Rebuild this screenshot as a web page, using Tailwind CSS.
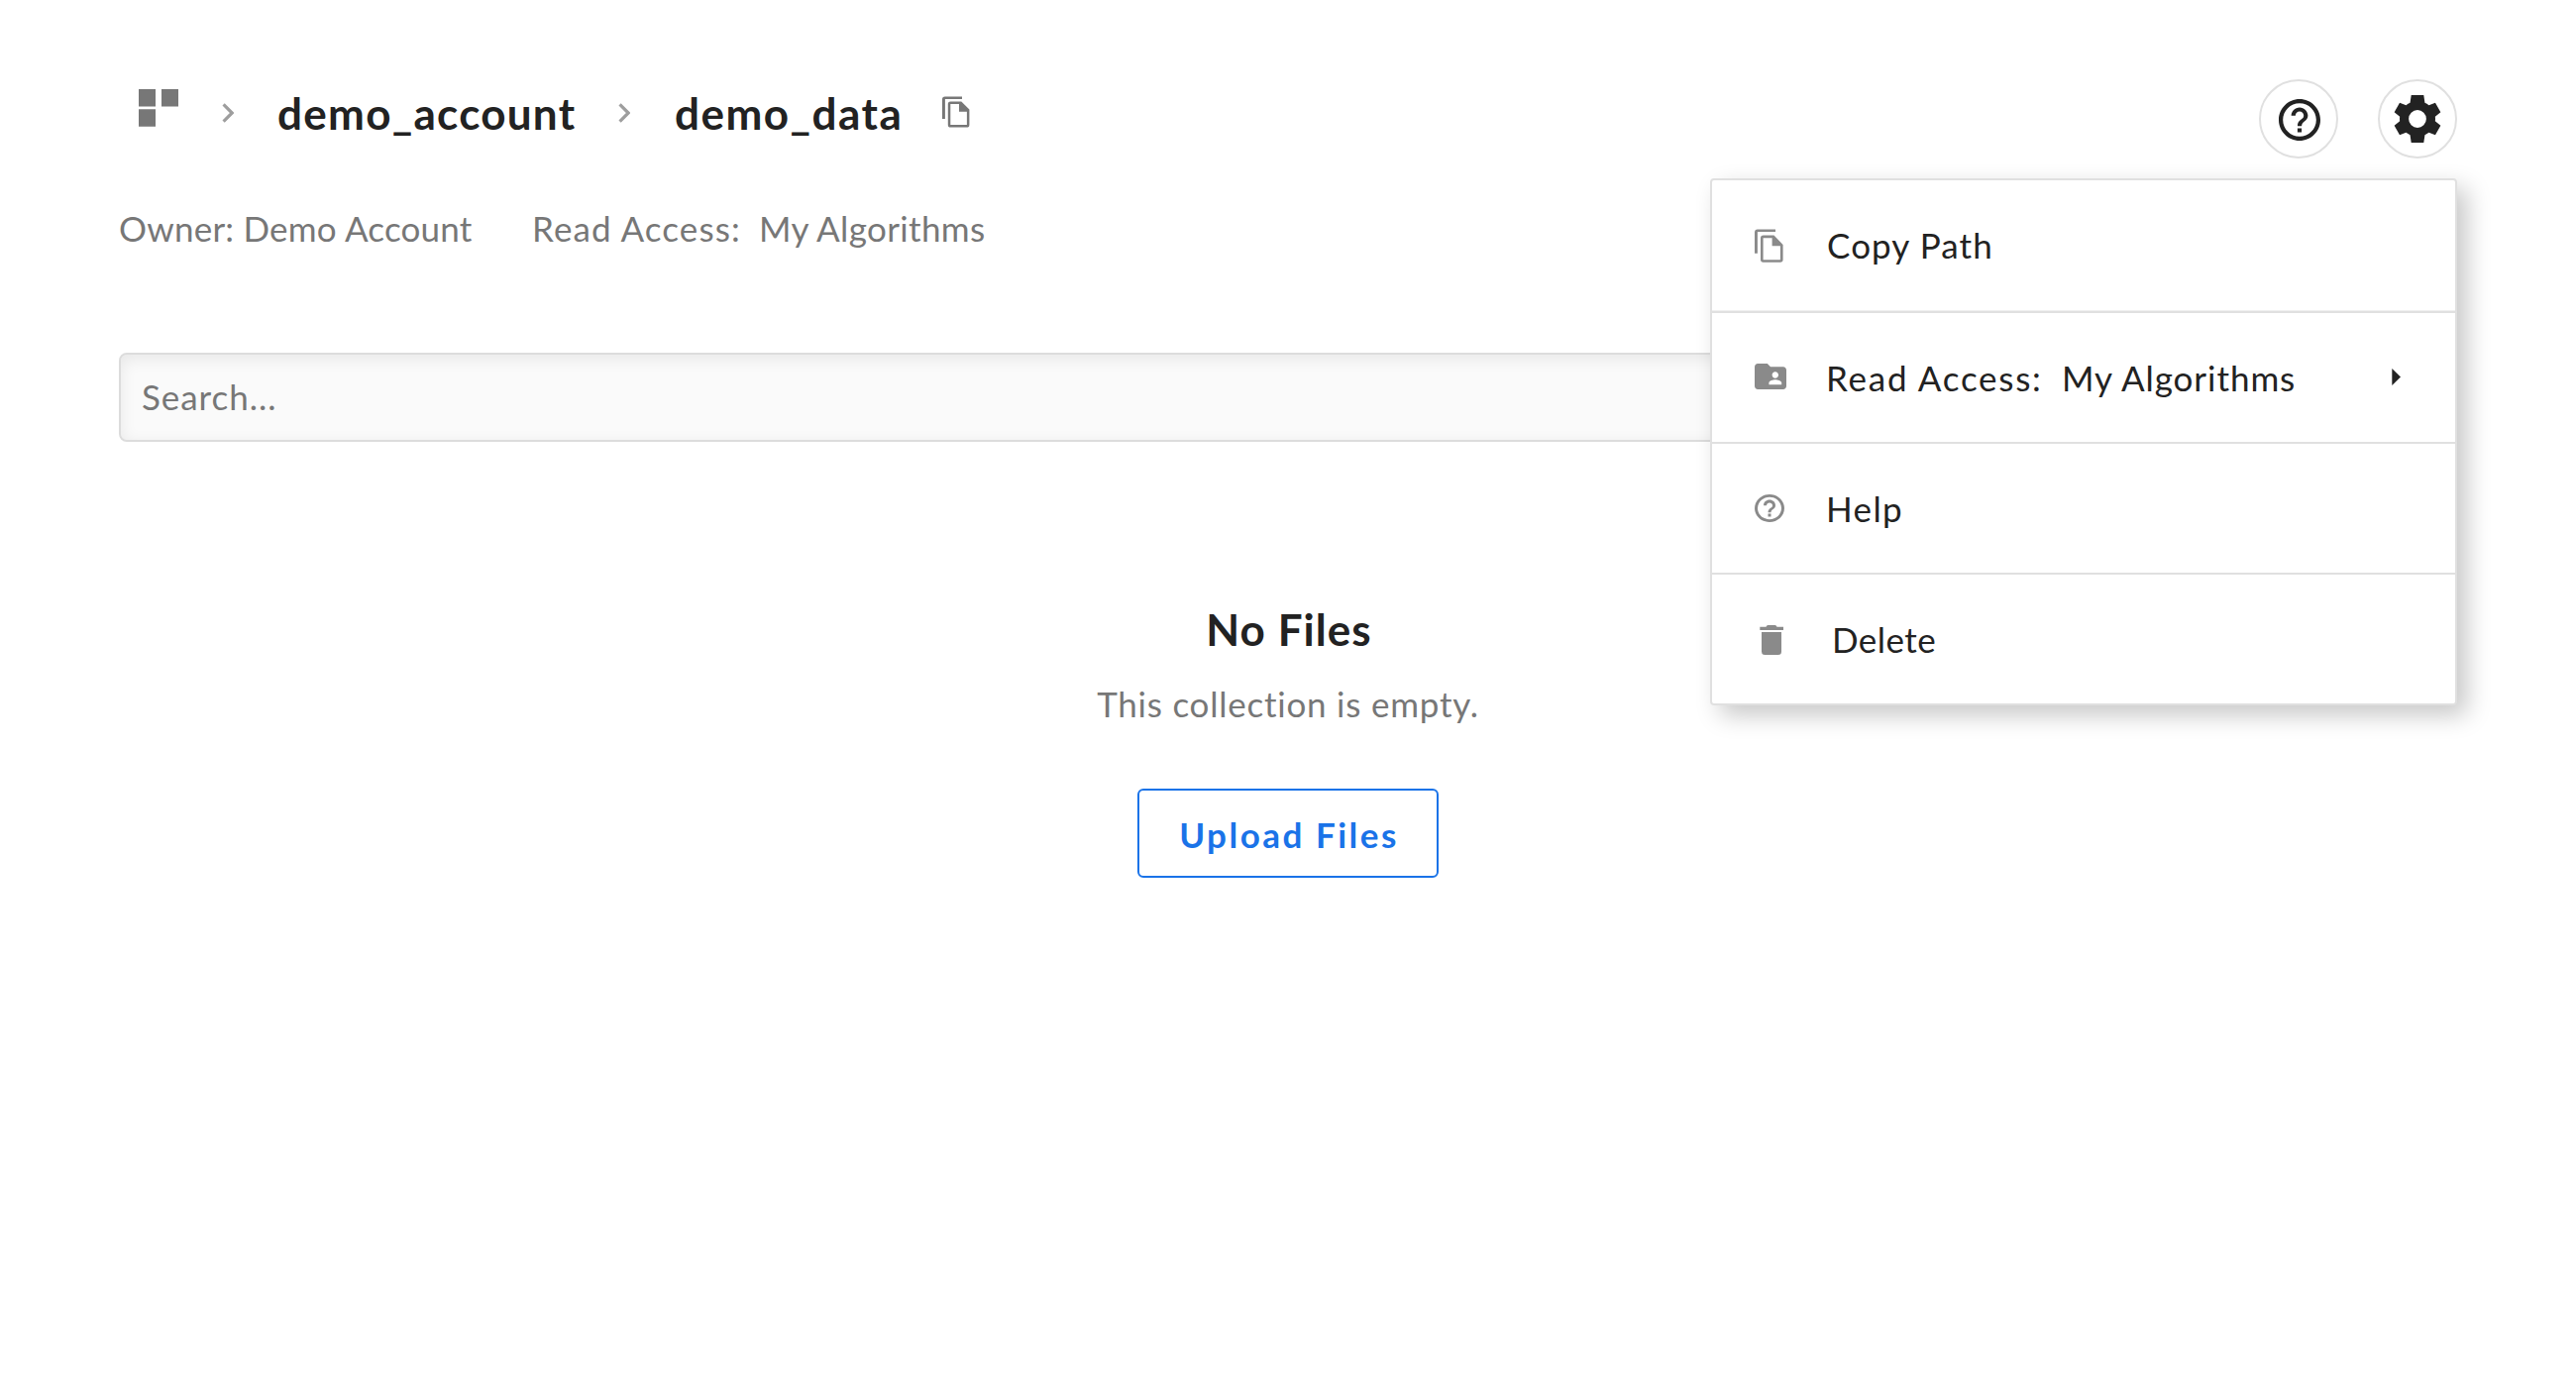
<!DOCTYPE html>
<html lang="en">
<head>
<meta charset="utf-8">
<title>demo_data</title>
<script src="https://cdn.jsdelivr.net/npm/@tailwindcss/browser@4"></script>
</head>
<body class="relative min-h-screen bg-white px-[120px] pt-20 font-['Lato',sans-serif] text-[35px] leading-[44px] text-[#222222]">

<header class="flex h-20 items-start justify-between">
  <nav class="flex h-[66px] items-center gap-11 pl-5 text-[44px] font-bold leading-[66px]">
    <svg class="mb-2 h-[38px] w-10 shrink-0" viewBox="0 0 40 38" fill="#777777"><path d="M0 0h17v17.4H0zM23 0h17v17.4H23zM0 20.2h17v17.5H0z"/></svg>
    <svg class="mt-0.5 h-5 w-3 shrink-0" viewBox="0 0 12 20" fill="none" stroke="#9e9e9e" stroke-width="3.2"><path d="M1.6 1.4 10.2 10 1.6 18.6"/></svg>
    <span class="w-[300px] whitespace-nowrap pt-0.5 tracking-[1.27px]">demo_account</span>
    <svg class="mt-0.5 h-5 w-3 shrink-0" viewBox="0 0 12 20" fill="none" stroke="#9e9e9e" stroke-width="3.2"><path d="M1.6 1.4 10.2 10 1.6 18.6"/></svg>
    <span class="w-[227px] whitespace-nowrap pl-px pt-0.5 tracking-[1.5px]">demo_data</span>
    <svg class="h-8 w-7 shrink-0" viewBox="0 0 28 32" fill="#777777"><path d="M20 .4v2.6H2.9v20H0V3.2A2.8 2.8 0 0 1 2.8.4zM8.400 5.400H19.300L27.400 13.500V28.900A2.600 2.600 0 0 1 24.800 31.500H8.400A2.600 2.600 0 0 1 5.800 28.900V8A2.600 2.600 0 0 1 8.400 5.400ZM8.300 8V29H24.900V15.800H17V8Z" fill-rule="evenodd"/></svg>
  </nav>
  <div class="flex gap-10">
    <button class="flex size-20 items-center justify-center rounded-full border-2 border-[#e0e0e0]">
      <svg class="mt-0.5 ml-0.5 size-[42px]" viewBox="2 2 20 20" fill="#222222"><path d="M11 18h2v-2h-2v2zm1-16C6.480 2 2 6.480 2 12s4.480 10 10 10 10-4.480 10-10S17.520 2 12 2zm0 18c-4.410 0-8-3.590-8-8s3.590-8 8-8 8 3.590 8 8-3.590 8-8 8zm0-14c-2.210 0-4 1.790-4 4h2c0-1.100.9-2 2-2s2 .9 2 2c0 2-3 1.750-3 5h2c0-2.250 3-2.500 3-5 0-2.210-1.790-4-4-4z"/></svg>
    </button>
    <button class="flex size-20 items-center justify-center rounded-full border-2 border-[#e0e0e0]">
      <svg class="size-12" viewBox="2 2 20 20" fill="#222222"><path fill-rule="evenodd" d="M19.430 12.980c.04-.32.07-.64.07-.98s-.03-.66-.07-.98l2.310-1.810-2.250-4.010-2.700 1.060c-.52-.4-1.080-.73-1.690-.98L14.620 2H9.380l-.48 3.280c-.61.25-1.170.59-1.690.98L4.510 5.200 2.260 9.210l2.310 1.810c-.04.32-.07.65-.07.98s.03.66.07.98l-2.310 1.810 2.250 4.010 2.700-1.060c.52.4 1.080.73 1.690.98l.48 3.280h5.240l.48-3.280c.61-.25 1.170-.59 1.690-.98l2.700 1.060 2.250-4.010zM12 15.700a3.700 3.700 0 1 1 0-7.400 3.700 3.700 0 0 1 0 7.400z"/></svg>
    </button>
  </div>
</header>

<div class="mt-12 flex h-11 whitespace-nowrap text-[#777777]">
  <span class="w-[417px] tracking-[0.22px]">Owner: Demo Account</span>
  <span class="w-[229px] tracking-[1.1px]">Read Access:</span>
  <span class="tracking-[0.35px]">My Algorithms</span>
</div>

<input type="text" placeholder="Search..." class="mt-[104px] block h-[90px] w-full rounded-lg border-2 border-[#dcdcdc] bg-[#fafafa] px-[21px] pb-0.5 tracking-[0.95px] shadow-[inset_0_4px_16px_rgba(0,0,0,0.08)] placeholder:text-[#777777]">

<main class="mt-[159px] flex flex-col items-center">
  <h1 class="pl-0.5 text-[44px] font-bold leading-[60px] tracking-[1.05px]">No Files</h1>
  <p class="mt-[23px] tracking-[0.77px] text-[#777777]">This collection is empty.</p>
  <button class="mt-[64px] h-[90px] w-[304px] rounded-md border-2 border-[#1a73e8] pl-0.5 pt-0.5 font-bold tracking-[2.5px] text-[#1a73e8]">Upload Files</button>
</main>

<ul class="absolute left-[1726px] top-[180px] w-[754px] divide-y-2 divide-[#e0e0e0] whitespace-nowrap rounded border-2 border-[#e0e0e0] bg-white shadow-[10px_10px_24px_rgba(0,0,0,0.22)]">
  <li class="flex h-[134px] items-center pl-[43px] shadow-[inset_0_-1px_0_#f0f0f0]">
    <div class="w-[73px]"><svg class="h-[34px] w-[29px]" viewBox="0 0 28 32" preserveAspectRatio="none" fill="#8a8a8a"><path d="M20.300 .4v2.400H2.800v20.400H0V3.200A2.800 2.800 0 0 1 2.800.4zM8.400 6.200H18.800L27.600 15V29.200A2.600 2.600 0 0 1 25 31.800H8.400A2.600 2.600 0 0 1 5.800 29.200V8.800A2.600 2.600 0 0 1 8.400 6.200ZM8.300 8.700V29.300H25V16.200H17V8.700Z" fill-rule="evenodd"/></svg></div>
    <span class="-mt-[3px] tracking-[1.1px]">Copy Path</span>
  </li>
  <li class="flex h-[132px] items-center pl-[43px]">
    <div class="w-[72px]"><svg class="mb-0.5 h-[26px] w-8" viewBox="2 4 20 16" preserveAspectRatio="none" fill="#8a8a8a"><path d="M20 6h-8l-2-2H4c-1.100 0-1.990.9-1.990 2L2 18c0 1.100.9 2 2 2h16c1.100 0 2-.9 2-2V8c0-1.100-.9-2-2-2zm-5 3c1.100 0 2 .9 2 2s-.9 2-2 2-2-.9-2-2 .9-2 2-2zm4 8h-8v-1c0-1.330 2.670-2 4-2s4 .67 4 2v1z"/></svg></div>
    <span class="w-[238px] tracking-[1.75px]">Read Access:</span>
    <span class="w-[333px] tracking-[0.95px]">My Algorithms</span>
    <svg class="mb-0.5 h-[17px] w-[9px]" viewBox="0 0 9 17" fill="#222222"><path d="M.3 0 9 8.500.3 17z"/></svg>
  </li>
  <li class="flex h-[132px] items-center pl-[43px]">
    <div class="w-[72px]"><svg class="h-7 w-[30px]" viewBox="2 2 20 20" preserveAspectRatio="none" fill="#8a8a8a"><path d="M11 18h2v-2h-2v2zm1-16C6.480 2 2 6.480 2 12s4.480 10 10 10 10-4.480 10-10S17.520 2 12 2zm0 18c-4.410 0-8-3.590-8-8s3.590-8 8-8 8 3.590 8 8-3.590 8-8 8zm0-14c-2.210 0-4 1.790-4 4h2c0-1.100.9-2 2-2s2 .9 2 2c0 2-3 1.750-3 5h2c0-2.250 3-2.500 3-5 0-2.210-1.790-4-4-4z"/></svg></div>
    <span class="tracking-[1.4px]">Help</span>
  </li>
  <li class="flex h-[130px] items-center pl-12">
    <div class="w-[73px]"><svg class="mt-0.5 h-[30px] w-6" viewBox="0 0 24 30" fill="#8a8a8a"><path d="M2 7h20v19.700a3.300 3.300 0 0 1-3.300 3.300H5.300A3.300 3.300 0 0 1 2 26.700zM24 1.700V5H.300V1.700H6.500Q7 0 8.500 0h7Q17 0 17.500 1.700z"/></svg></div>
    <span class="-mt-px tracking-[0.45px]">Delete</span>
  </li>
</ul>

</body>
</html>
